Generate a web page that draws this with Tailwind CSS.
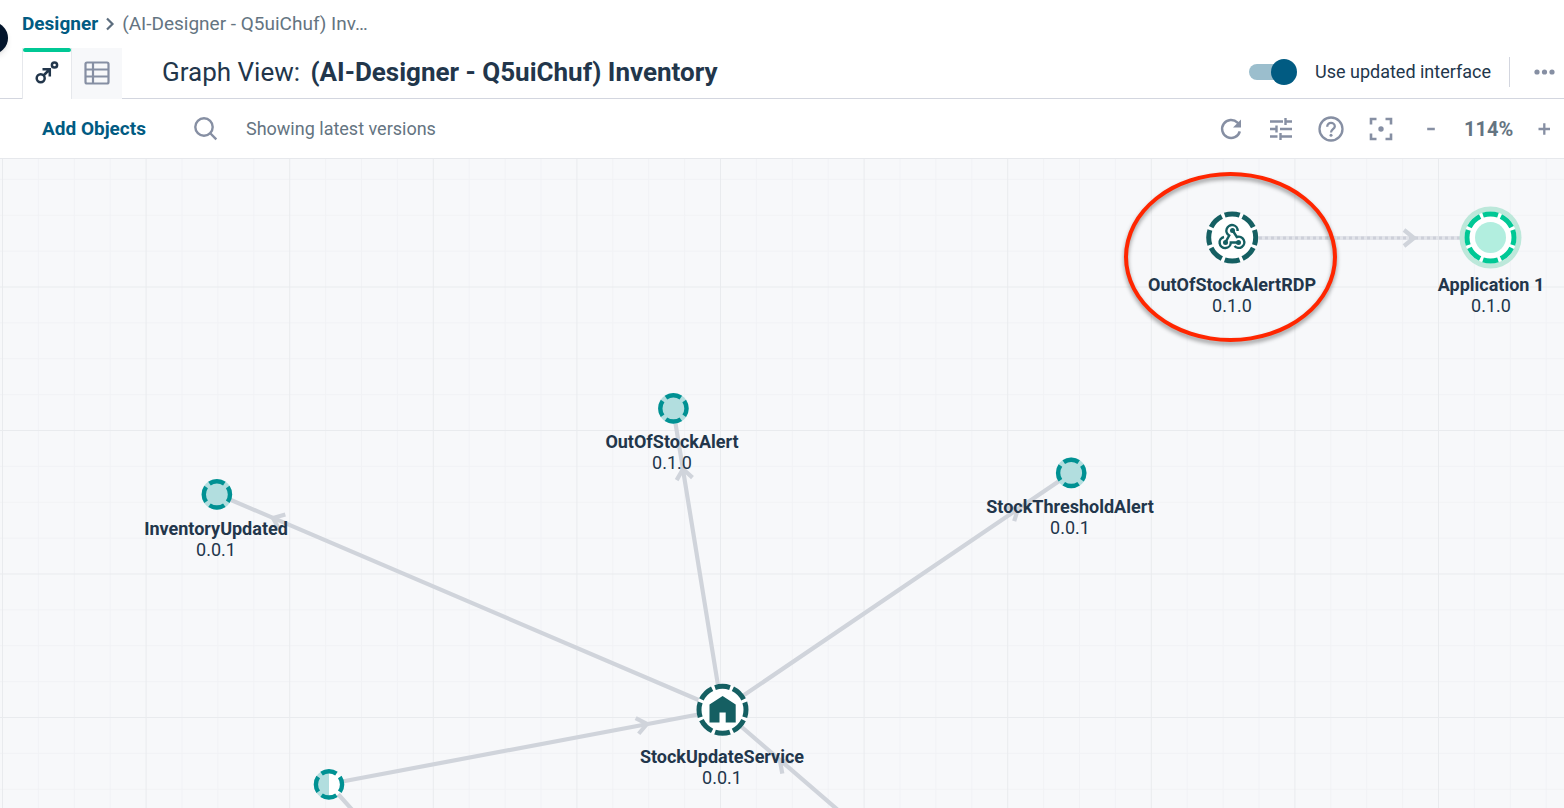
<!DOCTYPE html>
<html lang="en">
<head>
    <meta charset="UTF-8">
    <meta name="viewport" content="width=device-width, initial-scale=1.0">
    <title>Designer - Graph View</title>
    <script src="https://cdn.jsdelivr.net/npm/@tailwindcss/browser@4"></script>
</head>
<body class="font-[Roboto,sans-serif] text-lg leading-6 text-[#22364b] bg-white">
<div class="min-h-screen flex flex-col overflow-hidden">
    <!-- Header -->
    <header class="relative border-b border-[#d3d6df]">
        <button type="button" aria-label="Expand menu" class="absolute -left-6 top-[22px] w-8 h-8 rounded-full bg-[#03152b] shadow-md"></button>
        <nav aria-label="Breadcrumb" class="flex items-center pl-[22px] h-12 text-[19px]">
            <a href="#" class="font-bold text-[#015b82]">Designer</a>
            <svg class="w-6 h-6" viewBox="0 0 24 24" fill="none" stroke="#5c6d7e" stroke-width="2.200"><path d="M9 6.500l5.500 5.500L9 17.500"/></svg>
            <span class="text-[#647481]">(AI-Designer - Q5uiChuf) Inv…</span>
        </nav>
        <div class="flex items-center h-[50px] pl-[22px] pr-2">
            <div class="flex self-stretch -mb-px">
                <button type="button" aria-label="Graph view" class="w-[50px] bg-white border-x border-[#e6e8ec] flex flex-col items-center">
                    <span class="w-12 h-1 rounded-full bg-[#00c895]"></span>
                    <svg class="w-6 h-6 mt-2" viewBox="0 0 24 24" fill="none" stroke="#22364b" stroke-width="2.500">
                        <circle cx="5.700" cy="18.300" r="4"/><circle cx="19.500" cy="5" r="2.600"/>
                        <path d="M8.500 15.500l6-6M7.500 9.200h7.300v7.300"/>
                    </svg>
                </button>
                <button type="button" aria-label="Table view" class="w-[50px] pb-0.5 bg-[#f7f8fa] flex items-center justify-center">
                    <svg class="w-[26px] h-6" viewBox="0 0 26 24" fill="none" stroke="#868fa3" stroke-width="2.200"><rect x="1.500" y="1.500" width="23" height="21" rx="1.500"/><path d="M9 1v22M1 8.500h24M1 15.500h24"/></svg>
                </button>
            </div>
            <h1 class="ml-10 pb-0.5 text-[26px] leading-8 whitespace-pre">Graph View: <span class="ml-1 font-bold">(AI-Designer - Q5uiChuf) Inventory</span></h1>
            <div class="ml-auto pb-0.5 flex items-center">
                <label class="flex items-center gap-[18px] pr-[18px]">
                    <span class="relative flex items-center w-12 h-[26px]">
                        <input type="checkbox" checked class="peer sr-only">
                        <span class="w-10 h-4 rounded-full bg-[#9bbecd]"></span>
                        <span class="absolute right-0 w-[26px] h-[26px] rounded-full bg-[#015b82]"></span>
                    </span>
                    Use updated interface
                </label>
                <span class="w-px h-[30px] bg-[#d3d6df]"></span>
                <button type="button" aria-label="More actions" class="ml-6">
                    <svg class="w-[22px] h-6" viewBox="0 0 22 24" fill="#868fa3"><circle cx="3" cy="12" r="2.600"/><circle cx="10.500" cy="12" r="2.600"/><circle cx="18" cy="12" r="2.600"/></svg>
                </button>
            </div>
        </div>
    </header>

    <!-- Toolbar -->
    <div class="flex items-center h-[60px] pl-[42px] pr-3 border-b border-[#e6e8ec] text-[#647481]">
        <button type="button" class="font-bold text-[19px] text-[#015b82]">Add Objects</button>
        <button type="button" aria-label="Search" class="ml-12">
            <svg class="w-6 h-6" viewBox="0 0 24 24" fill="none" stroke="#868fa3" stroke-width="2.400"><circle cx="10" cy="10" r="8.700"/><path d="M16 16l6.300 6.300"/></svg>
        </button>
        <span class="ml-7">Showing latest versions</span>
        <div class="ml-auto flex items-center gap-6">
            <button type="button" aria-label="Refresh">
                <svg class="w-[26px] h-[26px]" viewBox="0 0 26 26" fill="none" stroke="#868fa3" stroke-width="2.500"><path d="M21.800 15.300a9 9 0 1 1-2.300-8.700l2 2"/><path d="M23 3.500v8h-8z" fill="#868fa3" stroke="none"/></svg>
            </button>
            <button type="button" aria-label="Settings">
                <svg class="w-[26px] h-[26px]" viewBox="0 0 26 26" fill="none" stroke="#868fa3" stroke-width="2.400"><path d="M2 5.500h13M17.500 5.500H24M17.500 2v7M2 13h6.500M8.500 9.500v7M12 13h12M2 20.500h7.500M12.500 20.500H24M12.500 17v7"/></svg>
            </button>
            <button type="button" aria-label="Help">
                <svg class="w-[26px] h-[26px]" viewBox="0 0 26 26" fill="none" stroke="#868fa3" stroke-width="2.300"><circle cx="13" cy="13" r="11.500"/><path d="M9.200 10.700c0-5.200 7.600-4.800 7.600-.3 0 2.700-3.800 3-3.800 6"/><circle cx="13" cy="19.300" r="1.500" fill="#868fa3" stroke="none"/></svg>
            </button>
            <button type="button" aria-label="Center graph">
                <svg class="w-[26px] h-[26px]" viewBox="0 0 26 26" fill="none" stroke="#868fa3" stroke-width="2.600"><path d="M3 8.500V3h5.500M17.500 3H23v5.500M23 17.500V23h-5.500M8.500 23H3v-5.500"/><circle cx="13" cy="13" r="2.700" fill="#868fa3" stroke="none"/></svg>
            </button>
            <button type="button" aria-label="Zoom out">
                <svg class="w-[26px] h-[26px]" viewBox="0 0 26 26" stroke="#868fa3" stroke-width="2.500"><path d="M9.200 13h7.600"/></svg>
            </button>
            <span class="-ml-1 w-12 text-center text-xl font-bold">114%</span>
            <button type="button" aria-label="Zoom in" class="w-4">
                <svg class="w-4 h-4" viewBox="0 0 16 16" stroke="#868fa3" stroke-width="2.300"><path d="M2.500 8h11.500M8.300 2.300v11.500"/></svg>
            </button>
        </div>
    </div>

    <!-- Graph canvas -->
    <main class="relative flex-1 min-h-[649px] bg-[#f7f8fa] overflow-hidden">
        <svg class="absolute inset-0 w-full h-full" fill="none">
            <defs>
                <pattern id="grid" x="2" y="-16" width="143.600" height="143.500" patternUnits="userSpaceOnUse">
                    <path d="M36.400 0v144M72.300 0v144M108.200 0v144M0 36.400h144M0 72.300h144M0 108.200h144" stroke="#f1f2f5"/>
                    <path d="M.500 0v144M0 .500h144" stroke="#e9ebee"/>
                </pattern>
                <path id="arrow" d="M-10-8L0 0l-10 8"/>
            </defs>
            <rect width="100%" height="100%" fill="url(#grid)"/>
            <g stroke="#d0d4db" stroke-width="4.200">
                <path d="M722 551L217 335M722 551L673 249M722 551L1071 314M722 551L329 625M722 551L853 664M329 625L365 665"/>
                <use href="#arrow" transform="translate(273 359) rotate(203)"/>
                <use href="#arrow" transform="translate(683 310) rotate(261)"/>
                <use href="#arrow" transform="translate(1018 350) rotate(326)"/>
                <use href="#arrow" transform="translate(647 565) rotate(349)"/>
                <use href="#arrow" transform="translate(780 602) rotate(221)"/>
            </g>
            <path d="M1257 79h205" stroke="#e2e4ea" stroke-width="4"/>
            <path d="M1259 79h203" stroke="#cdd0d9" stroke-width="3" stroke-dasharray="3 3"/>
            <use href="#arrow" transform="translate(1414 79)" stroke="#d0d4db" stroke-width="4.200"/>

            <!-- Event nodes -->
            <g stroke="#009193" stroke-width="4.400" fill="#b2dedf">
                <g id="event">
                    <circle cx="673.400" cy="249.400" r="15.300" stroke="none"/>
                    <circle cx="673.400" cy="249.400" r="13.100" pathLength="40" stroke-dasharray="7.700 2.300" stroke-dashoffset="3.850"/>
                </g>
                <use href="#event" x="-456.500" y="86"/>
                <use href="#event" x="397.800" y="64.500"/>
                <circle cx="329" cy="625.400" r="13.500" fill="#fff" stroke="none"/>
                <path d="M329 610.400a15 15 0 0 0 0 30z" stroke="none"/>
                <circle cx="329" cy="625.400" r="13.100" fill="none" pathLength="40" stroke-dasharray="7.700 2.300" stroke-dashoffset="3.850"/>
            </g>

            <!-- Application nodes -->
            <g stroke="#155f62" stroke-width="5" fill="#fff">
                <g id="app">
                    <circle cx="722.500" cy="550.800" r="26" stroke="none"/>
                    <circle cx="722.500" cy="550.800" r="23.500" pathLength="80" stroke-dasharray="8.300 1.700" stroke-dashoffset="4.150"/>
                </g>
                <use href="#app" x="509.700" y="-472.300"/>
            </g>
            <path d="M709.500 563.500v-18l13.100-8.500 13.100 8.500v18h-10v-10h-6.200v10z" fill="#155f62"/>
            <g transform="translate(1232 78.500)" stroke="#155f62" stroke-width="2.400">
                <path d="M5.600-6.500A5.600 5.600 0 1 0-2.800-2L-6.300 4.400"/>
                <path d="M-8-.5A5.600 5.600 0 1 0-1.200 5H6"/>
                <path d="M2.500 8.500A5.600 5.600 0 1 0 4.800-.5L.700-7"/>
                <g fill="#155f62" stroke="none"><circle cx=".500" cy="-7" r="2.500"/><circle cx="-6.500" cy="5" r="2.500"/><circle cx="6.500" cy="5" r="2.500"/></g>
            </g>
            <g transform="translate(1490.500 78.500)">
                <circle r="31" fill="#bce8da"/>
                <circle r="26" fill="#fff"/>
                <circle r="23.500" stroke="#00c895" stroke-width="5" pathLength="80" stroke-dasharray="8.300 1.700" stroke-dashoffset="4.150"/>
                <circle r="15.500" fill="#b2eedf"/>
            </g>
        </svg>

        <!-- Node labels -->
        <div class="absolute left-[1132px] top-[115px] w-[200px] text-center leading-[21px]"><p class="font-bold">OutOfStockAlertRDP</p><p>0.1.0</p></div>
        <div class="absolute left-[1391px] top-[115px] w-[200px] text-center leading-[21px]"><p class="font-bold">Application 1</p><p>0.1.0</p></div>
        <div class="absolute left-[572px] top-[272px] w-[200px] text-center leading-[21px]"><p class="font-bold">OutOfStockAlert</p><p>0.1.0</p></div>
        <div class="absolute left-[116px] top-[359px] w-[200px] text-center leading-[21px]"><p class="font-bold">InventoryUpdated</p><p>0.0.1</p></div>
        <div class="absolute left-[970px] top-[337px] w-[200px] text-center leading-[21px]"><p class="font-bold">StockThresholdAlert</p><p>0.0.1</p></div>
        <div class="absolute left-[622px] top-[587px] w-[200px] text-center leading-[21px]"><p class="font-bold">StockUpdateService</p><p>0.0.1</p></div>

        <!-- Highlight -->
        <div class="absolute left-[1124px] top-[13px] w-[213px] h-[170px] rounded-[50%] border-4 border-[#ff2600] drop-shadow-[0_3px_2px_rgba(0,0,0,0.4)]"></div>
    </main>
</div>
</body>
</html>
